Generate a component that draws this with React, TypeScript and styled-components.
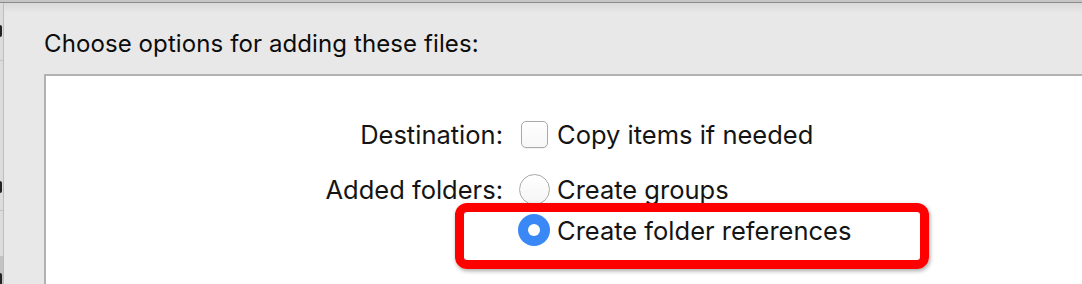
import React from 'react';
import styled, { createGlobalStyle } from 'styled-components';

const GlobalStyle = createGlobalStyle`
  html, body {
    margin: 0;
    padding: 0;
    background: #e8e8e8;
    overflow: hidden;
  }
  body {
    font-family: Inter, "Liberation Sans", Arial, sans-serif;
    -webkit-font-smoothing: antialiased;
  }
`;

const Screen = styled.div`
  width: 1082px;
  height: 284px;
  display: flex;
  flex-direction: column;
  background: #e8e8e8;
  overflow: hidden;
`;

const TopEdge = styled.div`
  height: 2px;
  background: #c6c6c6;
  border-bottom: 1px solid #8c8c8c;
  flex: none;
`;

const Body = styled.div`
  flex: 1;
  display: flex;
  min-height: 0;
`;

const SideStrip = styled.div`
  width: 3px;
  flex: none;
  display: flex;
  flex-direction: column;
  background: #dcdcdc;
  border-right: 1px solid #bdbdbd;
`;

const StripSegment = styled.div<{ h: number; dark?: boolean; mark?: number }>`
  height: ${({ h }) => h}px;
  flex: none;
  position: relative;
  background: ${({ dark }) => (dark ? '#c2c2c2' : 'transparent')};
  border-bottom: 1px solid #c4c4c4;

  &::after {
    content: '';
    display: ${({ mark }) => (mark === undefined ? 'none' : 'block')};
    position: absolute;
    left: 0;
    top: ${({ mark }) => mark ?? 0}px;
    width: 2px;
    height: 12px;
    background: #222;
    border-radius: 0 2px 2px 0;
  }
`;

const Dialog = styled.div`
  flex: 1;
  min-width: 0;
  padding-left: 40px;
  background: linear-gradient(to bottom, #d9d9d9 0px, #e8e8e8 10px, #e8e8e8 100%);
  display: flex;
  flex-direction: column;
`;

const Title = styled.div`
  margin-top: 24px;
  height: 33px;
  font-size: 24px;
  line-height: 33px;
  color: #0c0c0c;
  letter-spacing: 0.1px;
  white-space: nowrap;
`;

const Panel = styled.div`
  margin-top: 14px;
  flex: 1;
  margin-right: -20px;
  background: #fff;
  border-top: 2px solid #b2b2b2;
  border-left: 2px solid #b2b2b2;
  padding-top: 40px;
  display: flex;
  flex-direction: column;
`;

const Row = styled.div<{ gap: number }>`
  display: flex;
  align-items: center;
  height: 36px;
  margin-top: ${({ gap }) => gap}px;
  position: relative;
`;

const Label = styled.div`
  width: 457px;
  text-align: right;
  font-size: 25.5px;
  color: #141414;
  white-space: nowrap;
`;

const Control = styled.div`
  margin-left: 15px;
  display: flex;
  align-items: center;
  position: relative;
`;

const Slot = styled.div`
  width: 32px;
  height: 32px;
  display: flex;
  align-items: center;
  justify-content: center;
  flex: none;
`;

const CheckBox = styled.div`
  width: 25px;
  height: 25px;
  border: 1px solid #a9a9a9;
  border-radius: 5px;
  background: linear-gradient(#ffffff, #f7f7f7);
  box-shadow: 0 1px 1px rgba(0, 0, 0, 0.06);
`;

const Radio = styled.div<{ checked?: boolean }>`
  width: ${({ checked }) => (checked ? 32 : 31)}px;
  height: ${({ checked }) => (checked ? 32 : 31)}px;
  box-sizing: border-box;
  border-radius: 50%;
  border: ${({ checked }) => (checked ? 'none' : '1px solid #a9a9a9')};
  background: ${({ checked }) => (checked ? '#3a88f6' : 'linear-gradient(#ffffff, #f5f5f5)')};
  display: flex;
  align-items: center;
  justify-content: center;

  &::after {
    content: '';
    display: ${({ checked }) => (checked ? 'block' : 'none')};
    width: 12px;
    height: 12px;
    border-radius: 50%;
    background: #fff;
  }
`;

const OptionText = styled.span`
  margin-left: 7px;
  font-size: 25.5px;
  color: #141414;
  white-space: nowrap;
`;

const Highlight = styled.div`
  position: absolute;
  left: -63px;
  top: -11px;
  width: 474px;
  height: 66px;
  box-sizing: border-box;
  border: 9px solid #ff0000;
  border-radius: 12px;
  box-shadow: 1px 2px 4px rgba(0, 0, 0, 0.35);
  pointer-events: none;
`;

export default function App() {
  return (
    <>
      <GlobalStyle />
      <Screen>
        <TopEdge />
        <Body>
          <SideStrip>
            <StripSegment h={57} mark={22} />
            <StripSegment h={149} mark={120} />
            <StripSegment h={45} />
            <StripSegment h={40} dark mark={16} />
          </SideStrip>
          <Dialog>
            <Title>Choose options for adding these files:</Title>
            <Panel>
              <Row gap={0}>
                <Label>Destination:</Label>
                <Control>
                  <Slot>
                    <CheckBox />
                  </Slot>
                  <OptionText>Copy items if needed</OptionText>
                </Control>
              </Row>
              <Row gap={19}>
                <Label>Added folders:</Label>
                <Control>
                  <Slot>
                    <Radio />
                  </Slot>
                  <OptionText>Create groups</OptionText>
                </Control>
              </Row>
              <Row gap={5}>
                <Label />
                <Control>
                  <Slot>
                    <Radio checked />
                  </Slot>
                  <OptionText>Create folder references</OptionText>
                  <Highlight />
                </Control>
              </Row>
            </Panel>
          </Dialog>
        </Body>
      </Screen>
    </>
  );
}
